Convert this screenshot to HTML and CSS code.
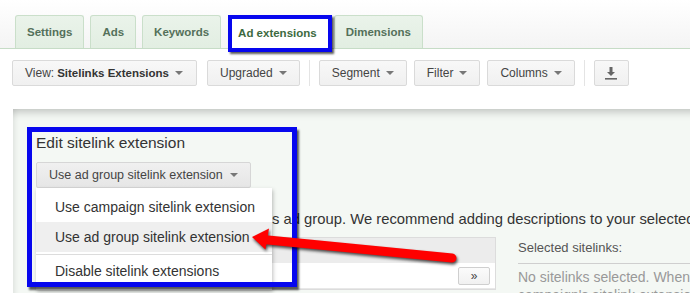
FILE: index.html
```html
<!DOCTYPE html>
<html>
<head>
<meta charset="utf-8">
<link rel="stylesheet" href="styles.css">
</head>
<body>
<div class="tabs">
  <div class="tab">Settings</div>
  <div class="tab">Ads</div>
  <div class="tab">Keywords</div>
  <div class="tab active">Ad extensions</div>
  <div class="tab">Dimensions</div>
</div>

<div class="toolbar">
  <button class="tbtn view">View: <b>Sitelinks Extensions</b><span class="caret"></span></button>
  <button class="tbtn">Upgraded<span class="caret"></span></button>
  <span class="sep"></span>
  <button class="tbtn">Segment<span class="caret"></span></button>
  <button class="tbtn">Filter<span class="caret"></span></button>
  <button class="tbtn">Columns<span class="caret"></span></button>
  <span class="sep"></span>
  <button class="tbtn icon" aria-label="Download">
    <svg width="14" height="14" viewBox="0 0 14 14"><path d="M5.5 1h3v5h2.5L7 10 3 6h2.5z" fill="#666"/><rect x="1" y="12" width="12" height="1.6" fill="#666"/></svg>
  </button>
</div>

<div class="panel">
  <h2 class="title">Edit sitelink extension</h2>
  <div class="dd">
    <button class="ddbtn">Use ad group sitelink extension<span class="caret"></span></button>
    <ul class="menu">
      <li class="item">Use campaign sitelink extension</li>
      <li class="item hl">Use ad group sitelink extension</li>
      <li class="divider"></li>
      <li class="item">Disable sitelink extensions</li>
    </ul>
  </div>
  <p class="desc">Select sitelinks to use with ads in this ad group. We recommend adding descriptions to your selected sitelinks.</p>
  <div class="picker">
    <div class="avail">
      <div class="avail-head"></div>
      <div class="avail-row"><button class="move">&raquo;</button></div>
    </div>
    <div class="selected">
      <div class="sel-title">Selected sitelinks:</div>
      <div class="sel-empty">No sitelinks selected. When you save, this ad group will use the campaign's sitelink extension.</div>
    </div>
  </div>
  <div class="annot-box"></div>
</div>

<svg class="arrow" width="690" height="293" viewBox="0 0 690 293">
  <line x1="263" y1="239.5" x2="452" y2="258" stroke="#ff0000" stroke-width="9" stroke-linecap="round"/>
  <polygon points="252,237 269,228.5 265.5,249.5" fill="#ff0000"/>
</svg>
</body>
</html>
```

FILE: styles.css
```css
html, body {
  margin: 0;
  padding: 0;
}
body {
  width: 690px;
  height: 293px;
  overflow: hidden;
  position: relative;
  background: #fff;
  font-family: "Liberation Sans", Arial, sans-serif;
  color: #333;
}

/* Tabs */
.tabs {
  display: flex;
  align-items: flex-start;
  gap: 6px;
  padding: 15px 0 0 15px;
  height: 33px;
  border-bottom: 1px solid #c6dcc6;
  background: linear-gradient(#ffffff, #f4f4f4);
}
.tab {
  height: 32px;
  line-height: 33px;
  padding: 0 11px;
  border: 1px solid #cadfca;
  border-bottom: none;
  border-radius: 3px 3px 0 0;
  background: linear-gradient(#eaf3ea, #e2eee2);
  font-size: 11.5px;
  font-weight: bold;
  color: #54705a;
  white-space: nowrap;
}
.tab.active {
  position: relative;
  z-index: 1;
  height: 29px;
  line-height: 29px;
  margin: 0 -4px -4px 1px;
  padding: 0 11px 0 6px;
  background: #fff;
  color: #3d6a40;
  border: 4px solid #0707ee;
  border-radius: 0;
  box-shadow: 2px 2px 2px rgba(0, 0, 0, 0.65);
}

/* Toolbar */
.toolbar {
  display: flex;
  align-items: center;
  gap: 7px;
  padding: 11px 0 0 12px;
}
.tbtn {
  display: flex;
  align-items: center;
  height: 26px;
  padding: 0 12px;
  border: 1px solid #dadada;
  border-radius: 2px;
  background: linear-gradient(#f8f8f8, #f0f0f0);
  font-family: "Liberation Sans", Arial, sans-serif;
  font-size: 12px;
  color: #444;
  white-space: nowrap;
}
.tbtn b {
  margin-left: 3px;
  color: #333;
  font-size: 11.5px;
}
.tbtn.view {
  margin-right: 3px;
  padding-right: 13px;
}
.tbtn.icon {
  width: 35px;
  justify-content: center;
  padding: 0;
}
.caret {
  display: inline-block;
  width: 0;
  height: 0;
  margin-left: 6px;
  border-left: 4px solid transparent;
  border-right: 4px solid transparent;
  border-top: 4px solid #777;
}
.sep {
  width: 1px;
  height: 26px;
  margin: 0 2px;
  background: #e4e4e4;
}

/* Panel */
.panel {
  position: relative;
  margin: 23px 0 0 13px;
  width: 1000px;
  height: 300px;
  padding: 25px 0 0 23px;
  box-sizing: border-box;
  background: #f4f8f4;
  box-shadow: inset 0 9px 8px -6px rgba(0, 0, 0, 0.22), inset 7px 0 6px -5px rgba(0, 0, 0, 0.08);
}
.title {
  margin: 0;
  font-size: 15.5px;
  line-height: 18px;
  font-weight: normal;
  color: #333;
}
.dd {
  position: relative;
  display: inline-block;
  margin-top: 10px;
}
.ddbtn {
  display: flex;
  align-items: center;
  height: 26px;
  padding: 0 12px 0 12px;
  border: 1px solid #d6d6d6;
  border-radius: 2px;
  background: linear-gradient(#f0f0f0, #e6e6e6);
  font-family: "Liberation Sans", Arial, sans-serif;
  font-size: 12.5px;
  color: #444;
}
.ddbtn .caret {
  margin-left: 7px;
}
.menu {
  position: absolute;
  z-index: 2;
  top: 100%;
  left: 0;
  width: 236px;
  margin: 0;
  padding: 4px 0;
  list-style: none;
  background: #fff;
  box-shadow: 1px 2px 4px rgba(0, 0, 0, 0.25);
}
.item {
  height: 30px;
  line-height: 30px;
  padding: 0 19px;
  font-size: 14px;
  color: #333;
  white-space: nowrap;
}
.item.hl {
  background: #efefef;
}
.divider {
  height: 1px;
  margin: 2px 0 1px;
  background: #dcdcdc;
}
.desc {
  margin: 22px 0 0;
  font-size: 14.8px;
  line-height: 18px;
  color: #333;
  white-space: nowrap;
}
.picker {
  display: flex;
  align-items: flex-start;
  margin-top: 9px;
}
.avail {
  width: 460px;
  border: 1px solid #dcdcdc;
  box-sizing: border-box;
  background: #fff;
}
.avail-head {
  height: 25px;
  background: #ececec;
}
.avail-row {
  display: flex;
  justify-content: flex-end;
  padding: 4px 5px 3px 0;
  border-bottom: 1px solid #e8e8e8;
}
.move {
  width: 32px;
  height: 18px;
  padding: 0;
  border: 1px solid #cfcfcf;
  border-radius: 2px;
  background: linear-gradient(#fbfbfb, #f1f1f1);
  font-family: "Liberation Sans", Arial, sans-serif;
  font-size: 12px;
  line-height: 14px;
  color: #444;
}
.selected {
  width: 420px;
  margin-left: 22px;
}
.sel-title {
  padding: 3px 0 7px;
  font-size: 13px;
  line-height: 16px;
  color: #555;
  border-bottom: 1px solid #cfcfcf;
}
.sel-empty {
  margin-top: 4px;
  font-size: 14px;
  line-height: 18px;
  color: #999;
}

/* Annotations */
.annot-box {
  position: absolute;
  z-index: 3;
  left: 14px;
  top: 18px;
  width: 270px;
  height: 160px;
  box-sizing: border-box;
  border: 5px solid #0707ee;
  box-shadow: 2px 3px 2px rgba(0, 0, 0, 0.65);
}
.arrow {
  position: absolute;
  z-index: 4;
  left: 0;
  top: 0;
  pointer-events: none;
  filter: drop-shadow(1.5px 2.5px 1.5px rgba(0, 0, 0, 0.7));
}
```
